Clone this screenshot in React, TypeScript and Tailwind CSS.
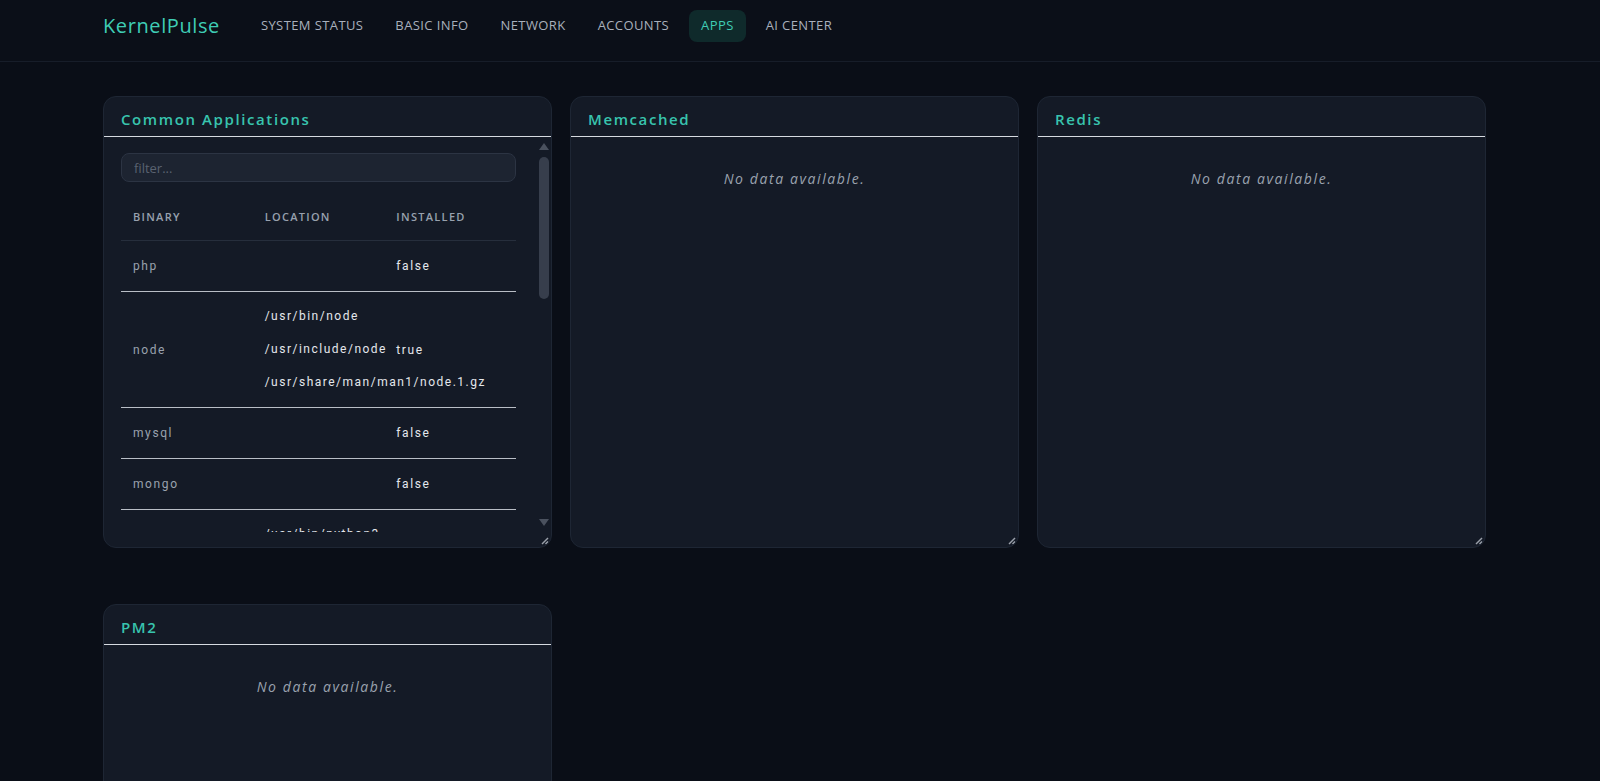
import { useState } from 'react'

const navItems = ['System Status', 'Basic Info', 'Network', 'Accounts', 'Apps', 'AI Center']

interface AppRow {
  binary: string
  locations: string[]
  installed: boolean
}

const apps: AppRow[] = [
  { binary: 'php', locations: [], installed: false },
  { binary: 'node', locations: ['/usr/bin/node', '/usr/include/node', '/usr/share/man/man1/node.1.gz'], installed: true },
  { binary: 'mysql', locations: [], installed: false },
  { binary: 'mongo', locations: [], installed: false },
  { binary: 'python', locations: ['/usr/bin/python3', '/usr/lib/python3'], installed: true },
]

function ResizeGrip() {
  return (
    <svg className="absolute right-[2px] bottom-[2px] w-[8px] h-[8px]" viewBox="0 0 8 8">
      <line x1="7" y1="1" x2="1" y2="7" stroke="#9aa0aa" strokeWidth="1.4" />
      <line x1="7" y1="4.5" x2="4.5" y2="7" stroke="#9aa0aa" strokeWidth="1.4" />
    </svg>
  )
}

function Card({ title, children }: { title: string; children: React.ReactNode }) {
  return (
    <div className="relative w-[449px] h-[452px] flex flex-col bg-[#141a26] border border-[#1e2634] rounded-[13px] overflow-hidden">
      <div className="h-[40px] shrink-0 flex items-center pt-[6px] px-[17px] border-b border-[#d6dae0]">
        <h2 className="text-[15px] font-semibold tracking-[1.6px] text-[#38c4ae]">{title}</h2>
      </div>
      {children}
      <ResizeGrip />
    </div>
  )
}

function EmptyState() {
  return (
    <div className="pt-[33px] text-center text-[14px] leading-[18px] italic tracking-[1.6px] text-[#9aa2ae]">
      No data available.
    </div>
  )
}

function FakeScrollbar() {
  return (
    <div className="w-[15px] shrink-0 flex flex-col items-center pt-[6px] pb-[6px]">
      <div className="w-0 h-0 border-x-[5px] border-x-transparent border-b-[7px] border-b-[#4a515e]" />
      <div className="mt-[7px] w-[10px] h-[142px] rounded-full bg-[#373e4c]" />
      <div className="flex-1" />
      <div className="w-0 h-0 border-x-[5px] border-x-transparent border-t-[7px] border-t-[#4a515e]" />
    </div>
  )
}

function CommonApplications() {
  const [filter, setFilter] = useState('')
  const rows = apps.filter((a) => a.binary.includes(filter.toLowerCase()))

  return (
    <Card title="Common Applications">
      <div className="flex-1 min-h-0 flex pb-[15px]">
        <div className="flex-1 min-w-0 overflow-hidden pl-[17px] pr-[20px] pt-[16px]">
          <input
            value={filter}
            onChange={(e) => setFilter(e.target.value)}
            placeholder="filter..."
            className="w-full h-[29px] px-3 rounded-lg bg-[#1d2431] border border-[#2c3443] text-[13px] text-gray-200 placeholder:text-[#5a6270] outline-none"
          />
          <table className="w-full table-fixed mt-[10px] border-collapse font-['Roboto',sans-serif]">
            <thead>
              <tr className="border-b border-[#262e3c]">
                {['Binary', 'Location', 'Installed'].map((h) => (
                  <th
                    key={h}
                    className="px-3 pt-[17px] pb-[15px] text-left text-[11px] leading-4 font-semibold uppercase tracking-[1.3px] text-[#98a1ae] font-['Open_Sans',sans-serif]"
                  >
                    {h}
                  </th>
                ))}
              </tr>
            </thead>
            <tbody>
              {rows.map((row) => (
                <tr key={row.binary} className="border-b border-[#b9bec6]">
                  <td className="px-3 py-4 text-[12px] leading-[18px] tracking-[1.6px] text-[#9aa2ae]">{row.binary}</td>
                  <td className="px-3 py-2 text-[12px] tracking-[1.5px] text-[#e4e7ec] whitespace-nowrap">
                    {row.locations.map((loc) => (
                      <div key={loc} className="leading-[33px]">
                        {loc}
                      </div>
                    ))}
                  </td>
                  <td className="px-3 py-4 text-[12px] leading-[18px] tracking-[1.6px] text-[#e4e7ec]">
                    {row.installed ? 'true' : 'false'}
                  </td>
                </tr>
              ))}
            </tbody>
          </table>
        </div>
        <FakeScrollbar />
      </div>
    </Card>
  )
}

export default function App() {
  return (
    <div className="min-h-screen bg-[#0a0e17] font-['Open_Sans',sans-serif]">
      <header className="h-[62px] border-b border-[#171d29] bg-[#0b0f18]">
        <div className="max-w-[1394px] mx-auto h-[52px] flex items-center">
          <div className="text-[20px] font-medium tracking-[0.6px] text-[#3fcdb5] mr-[29px]">KernelPulse</div>
          <nav className="flex items-center gap-2">
            {navItems.map((item) => (
              <a
                key={item}
                href="#"
                className={
                  item === 'Apps'
                    ? 'px-3 h-[32px] flex items-center rounded-lg bg-[#0f2a2b] text-[13px] font-medium uppercase tracking-[0.4px] text-[#3fcdb5]'
                    : 'px-3 h-[32px] flex items-center rounded-lg text-[13px] font-medium uppercase tracking-[0.4px] text-[#a9b0bc]'
                }
              >
                {item}
              </a>
            ))}
          </nav>
        </div>
      </header>

      <main className="max-w-[1394px] mx-auto pt-[34px] pb-10 flex flex-wrap gap-x-[18px] gap-y-[56px]">
        <CommonApplications />
        <Card title="Memcached">
          <EmptyState />
        </Card>
        <Card title="Redis">
          <EmptyState />
        </Card>
        <Card title="PM2">
          <EmptyState />
        </Card>
      </main>
    </div>
  )
}
